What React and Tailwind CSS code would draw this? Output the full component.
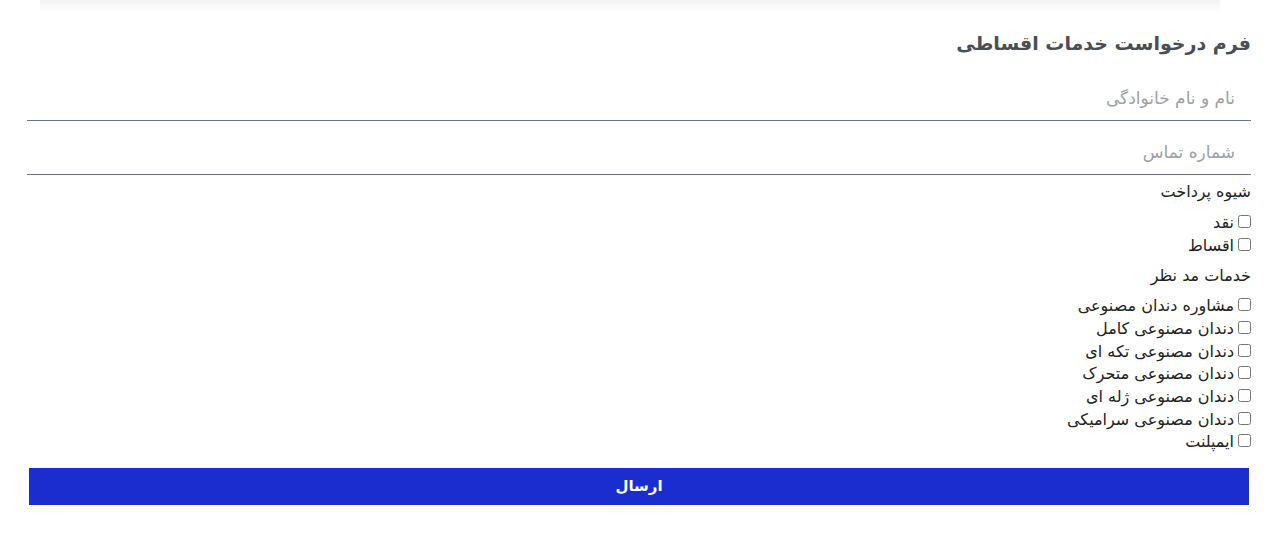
export default function App(){
  const services = [
    "مشاوره دندان مصنوعی",
    "دندان مصنوعی کامل",
    "دندان مصنوعی تکه ای",
    "دندان مصنوعی متحرک",
    "دندان مصنوعی ژله ای",
    "دندان مصنوعی سرامیکی",
    "ایمپلنت",
  ];
  return (
    <div dir="rtl" className="bg-white min-h-[551px] font-['DejaVu_Sans','Noto_Sans',sans-serif] text-[#222]">
      <div className="h-3 ml-[40px] mr-[60px] bg-gradient-to-b from-[#f3f3f3] to-white"></div>
      <form className="px-[29px]" onSubmit={e=>e.preventDefault()}>
        <h2 className="text-[19px] font-bold text-[#4a4f57] pt-[16px] pb-[9px] leading-[30px]">فرم درخواست خدمات اقساطی</h2>
        <input className="w-[calc(100%+2px)] -ml-[2px] h-[54px] pt-[8px] px-4 border-b-[1.5px] border-[#6b7280] outline-none text-[17px] placeholder:text-[#9aa0a6]" placeholder="نام و نام خانوادگی"/>
        <input className="w-[calc(100%+2px)] -ml-[2px] h-[54px] pt-[8px] px-4 border-b-[1.5px] border-[#6b7280] outline-none text-[17px] placeholder:text-[#9aa0a6]" placeholder="شماره تماس"/>
        <p className="text-[16px] mt-[5px] leading-6">شیوه پرداخت</p>
        <div className="mt-[7px] text-[16px]">
          {["نقد","اقساط"].map(o=>(
            <label key={o} className="flex items-center gap-1 h-[23px]"><input type="checkbox" className="w-[13px] h-[13px] -mt-[3px]"/>{o}</label>
          ))}
        </div>
        <p className="text-[16px] mt-[7px] leading-6">خدمات مد نظر</p>
        <div className="mt-[7px] text-[16px]">
          {services.map(o=>(
            <label key={o} className="flex items-center gap-1 h-[22.67px]"><input type="checkbox" className="w-[13px] h-[13px] -mt-[3px]"/>{o}</label>
          ))}
        </div>
        <button className="block mt-[14px] mr-[2px] w-[calc(100%-2px)] h-[37px] bg-[#1a2ecf] text-white font-bold text-[15px]">ارسال</button>
      </form>
    </div>
  );
}
